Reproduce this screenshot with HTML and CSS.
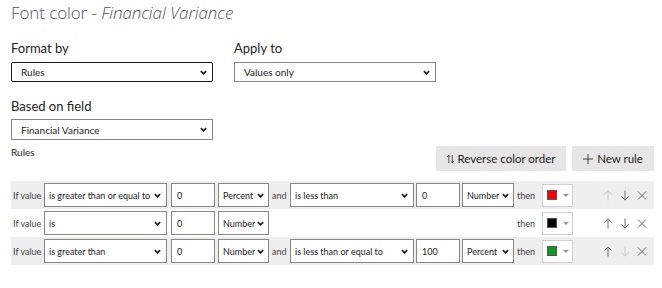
FILE: index.html
```html
<!DOCTYPE html>
<html lang="en">
<head>
  <meta charset="UTF-8">
  <title>Font color - Financial Variance</title>
  <link rel="stylesheet" href="styles.css">
</head>
<body>
  <div class="panel">
    <h1 class="title">Font color - <em>Financial Variance</em></h1>

    <div class="fields">
      <div class="field">
        <label>Format by</label>
        <div class="select focused"><span>Rules</span><svg class="chev" viewBox="0 0 8 5"><path d="M1 1 L4 4 L7 1"/></svg></div>
      </div>
      <div class="field">
        <label>Apply to</label>
        <div class="select"><span>Values only</span><svg class="chev" viewBox="0 0 8 5"><path d="M1 1 L4 4 L7 1"/></svg></div>
      </div>
    </div>

    <div class="fields">
      <div class="field">
        <label>Based on field</label>
        <div class="select"><span>Financial Variance</span><svg class="chev" viewBox="0 0 8 5"><path d="M1 1 L4 4 L7 1"/></svg></div>
      </div>
    </div>

    <div class="rules-head">
      <span class="rules-label">Rules</span>
      <div class="actions">
        <button class="btn rev">
          <svg viewBox="0 0 8 10" class="ico"><path d="M2 9.5 V0.8 M0.3 2.5 L2 0.8 L3.7 2.5 M6 0.5 V9.2 M4.3 7.5 L6 9.2 L7.7 7.5"/></svg>
          Reverse color order
        </button>
        <button class="btn new">
          <svg viewBox="0 0 10 10" class="ico plus"><path d="M5 0 V10 M0 5 H10"/></svg>
          New rule
        </button>
      </div>
    </div>

    <div class="rules">
      <div class="rule shade">
        <span class="txt if">If value</span>
        <div class="select cond"><span>is greater than or equal to</span><svg class="chev" viewBox="0 0 8 5"><path d="M1 1 L4 4 L7 1"/></svg></div>
        <div class="input num">0</div>
        <div class="select unit"><span>Percent</span><svg class="chev" viewBox="0 0 8 5"><path d="M1 1 L4 4 L7 1"/></svg></div>
        <div class="second">
          <span class="txt and">and</span>
          <div class="select cond2"><span>is less than</span><svg class="chev" viewBox="0 0 8 5"><path d="M1 1 L4 4 L7 1"/></svg></div>
          <div class="input num2">0</div>
          <div class="select unit2"><span>Number</span><svg class="chev" viewBox="0 0 8 5"><path d="M1 1 L4 4 L7 1"/></svg></div>
        </div>
        <span class="txt then">then</span>
        <div class="picker"><span class="swatch red"></span><svg class="caret" viewBox="0 0 6 3"><path d="M0 0 H6 L3 3 Z"/></svg></div>
        <div class="tools">
          <svg class="tool off" viewBox="0 0 10 12"><path d="M5 11.5 V1 M1 5 L5 1 L9 5"/></svg>
          <svg class="tool" viewBox="0 0 10 12"><path d="M5 0.5 V11 M1 7 L5 11 L9 7"/></svg>
          <svg class="tool" viewBox="0 0 10 10"><path d="M1 1 L9 9 M9 1 L1 9"/></svg>
        </div>
      </div>

      <div class="rule">
        <span class="txt if">If value</span>
        <div class="select cond"><span>is</span><svg class="chev" viewBox="0 0 8 5"><path d="M1 1 L4 4 L7 1"/></svg></div>
        <div class="input num">0</div>
        <div class="select unit"><span>Number</span><svg class="chev" viewBox="0 0 8 5"><path d="M1 1 L4 4 L7 1"/></svg></div>
        <div class="second"></div>
        <span class="txt then">then</span>
        <div class="picker"><span class="swatch black"></span><svg class="caret" viewBox="0 0 6 3"><path d="M0 0 H6 L3 3 Z"/></svg></div>
        <div class="tools">
          <svg class="tool" viewBox="0 0 10 12"><path d="M5 11.5 V1 M1 5 L5 1 L9 5"/></svg>
          <svg class="tool" viewBox="0 0 10 12"><path d="M5 0.5 V11 M1 7 L5 11 L9 7"/></svg>
          <svg class="tool" viewBox="0 0 10 10"><path d="M1 1 L9 9 M9 1 L1 9"/></svg>
        </div>
      </div>

      <div class="rule shade">
        <span class="txt if">If value</span>
        <div class="select cond"><span>is greater than</span><svg class="chev" viewBox="0 0 8 5"><path d="M1 1 L4 4 L7 1"/></svg></div>
        <div class="input num">0</div>
        <div class="select unit"><span>Number</span><svg class="chev" viewBox="0 0 8 5"><path d="M1 1 L4 4 L7 1"/></svg></div>
        <div class="second">
          <span class="txt and">and</span>
          <div class="select cond2"><span>is less than or equal to</span><svg class="chev" viewBox="0 0 8 5"><path d="M1 1 L4 4 L7 1"/></svg></div>
          <div class="input num2">100</div>
          <div class="select unit2"><span>Percent</span><svg class="chev" viewBox="0 0 8 5"><path d="M1 1 L4 4 L7 1"/></svg></div>
        </div>
        <span class="txt then">then</span>
        <div class="picker"><span class="swatch green"></span><svg class="caret" viewBox="0 0 6 3"><path d="M0 0 H6 L3 3 Z"/></svg></div>
        <div class="tools">
          <svg class="tool" viewBox="0 0 10 12"><path d="M5 11.5 V1 M1 5 L5 1 L9 5"/></svg>
          <svg class="tool off" viewBox="0 0 10 12"><path d="M5 0.5 V11 M1 7 L5 11 L9 7"/></svg>
          <svg class="tool" viewBox="0 0 10 10"><path d="M1 1 L9 9 M9 1 L1 9"/></svg>
        </div>
      </div>
    </div>
  </div>
</body>
</html>
```

FILE: styles.css
```css
:root {
  --text: #252423;
  --border: #8a8886;
  --shade: #eeeeee;
  --btn: #e6e6e6;
  --font: Lato, 'Open Sans', Arial, sans-serif;
}

body {
  margin: 0;
  font-family: var(--font);
  color: var(--text);
  background: #fff;
}

.panel {
  width: 643px;
  padding: 0 8px 0 11px;
}

.title {
  margin: 0;
  height: 39px;
  font-family: 'Open Sans', Arial, sans-serif;
  font-size: 17px;
  font-weight: 300;
  line-height: 26px;
  color: #555;
  letter-spacing: -0.1px;
}

.title em {
  font-style: italic;
}

.fields {
  display: flex;
  gap: 21px;
}

.field {
  width: 202px;
  display: flex;
  flex-direction: column;
}

.field label {
  font-size: 13px;
  line-height: 18px;
  height: 23px;
}

.fields + .fields label {
  height: 22px;
}

.field .select {
  height: 20px;
  margin-bottom: 15px;
}

.fields + .fields .select {
  height: 21px;
  margin-bottom: 6px;
}

.select {
  box-sizing: border-box;
  border: 1px solid var(--border);
  background: #fff;
  display: flex;
  align-items: center;
  justify-content: space-between;
  padding: 0 5px 0 9px;
  font-size: 10px;
  color: var(--text);
  white-space: nowrap;
  overflow: hidden;
}

.select span {
  overflow: hidden;
}

.select.focused {
  border: 1.5px solid #1b1a19;
  border-radius: 2px;
}

.chev {
  width: 7px;
  height: 5px;
  flex: none;
  fill: none;
  stroke: #1b1a19;
  stroke-width: 1.9;
}

.rules-head {
  display: flex;
  justify-content: space-between;
  align-items: flex-start;
  height: 35px;
}

.rules-label {
  font-size: 10px;
  line-height: 14px;
  margin-top: -1px;
}

.actions {
  display: flex;
  gap: 6px;
}

.btn {
  height: 25px;
  border: 0;
  background: var(--btn);
  font-family: var(--font);
  font-size: 11.5px;
  color: var(--text);
  display: flex;
  align-items: center;
  justify-content: center;
  gap: 4px;
  padding: 0;
}

.btn.rev {
  width: 130px;
}

.btn.new {
  width: 82px;
}

.ico {
  width: 7px;
  height: 10px;
  fill: none;
  stroke: #444;
  stroke-width: 1;
}

.ico.plus {
  width: 10px;
  height: 10px;
}

.rules {
  display: flex;
  flex-direction: column;
}

.rule {
  height: 28px;
  display: flex;
  align-items: center;
}

.rule.shade {
  background: var(--shade);
}

.rule .select,
.rule .input {
  height: 24px;
  font-size: 9px;
}

.txt {
  font-size: 9px;
  color: #444;
}

.if {
  width: 31px;
  padding-left: 2px;
}

.cond {
  width: 123px;
  padding-left: 4px !important;
}

.input {
  box-sizing: border-box;
  border: 1px solid var(--border);
  background: #fff;
  display: flex;
  align-items: center;
  padding-left: 5px;
}

.num {
  width: 44px;
  margin-left: 4px;
}

.unit {
  width: 51px;
  margin-left: 3px;
  padding: 0 4px !important;
}

.second {
  width: 245px;
  display: flex;
  align-items: center;
}

.and {
  width: 18px;
  margin-left: 3px;
}

.cond2 {
  width: 124px;
  padding-left: 4px !important;
}

.num2 {
  width: 44px;
  margin-left: 2px;
}

.unit2 {
  width: 52px;
  margin-left: 2px;
  padding: 0 4px !important;
}

.then {
  margin-left: 3px;
  width: 25px;
}

.picker {
  box-sizing: border-box;
  width: 31px;
  height: 23px;
  border: 1px solid #d0d0d0;
  background: #fff;
  display: flex;
  align-items: center;
  padding-left: 4px;
  gap: 6px;
}

.swatch {
  width: 10px;
  height: 10px;
  border: 0.5px solid #555;
  box-sizing: border-box;
}

.swatch.red { background: #ff0000; }
.swatch.black { background: #000000; }
.swatch.green { background: #0a9b1f; }

.caret {
  width: 6px;
  height: 3px;
  fill: #999;
}

.tools {
  margin-left: auto;
  margin-right: 7px;
  display: flex;
  gap: 7px;
  align-items: center;
}

.tool {
  width: 10px;
  height: 11px;
  fill: none;
  stroke: #666;
  stroke-width: 1;
}

.tool.off {
  stroke: #c8c8c8;
}
```
